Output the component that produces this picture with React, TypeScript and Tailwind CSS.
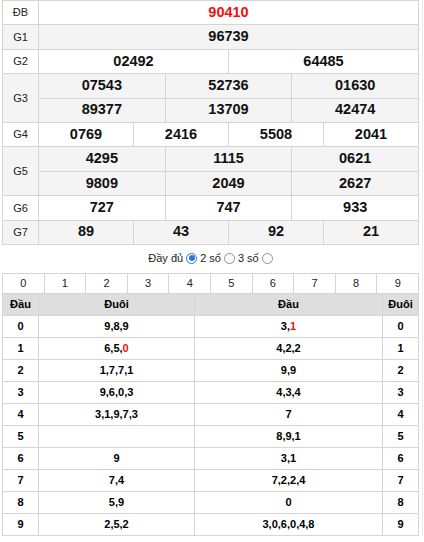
import React from "react";

const line = "border-[#d5d5d5]";

type Prize = { label: string; bg: string; span: string; nums: string[]; red?: boolean; double?: boolean };

const prizes: Prize[] = [
  { label: "ĐB", bg: "bg-white", span: "col-span-12", nums: ["90410"], red: true },
  { label: "G1", bg: "bg-[#f4f4f4]", span: "col-span-12", nums: ["96739"] },
  { label: "G2", bg: "bg-white", span: "col-span-6", nums: ["02492", "64485"] },
  { label: "G3", bg: "bg-[#f4f4f4]", span: "col-span-4", nums: ["07543", "52736", "01630", "89377", "13709", "42474"], double: true },
  { label: "G4", bg: "bg-white", span: "col-span-3", nums: ["0769", "2416", "5508", "2041"] },
  { label: "G5", bg: "bg-[#f4f4f4]", span: "col-span-4", nums: ["4295", "1115", "0621", "9809", "2049", "2627"], double: true },
  { label: "G6", bg: "bg-white", span: "col-span-4", nums: ["727", "747", "933"] },
  { label: "G7", bg: "bg-[#f4f4f4]", span: "col-span-3", nums: ["89", "43", "92", "21"] },
];

// [head, duoi list, dau list]; a "*" marks the red digit
const loto: [string, string, string][] = [
  ["0", "9,8,9", "3,*1"],
  ["1", "6,5,*0", "4,2,2"],
  ["2", "1,7,7,1", "9,9"],
  ["3", "9,6,0,3", "4,3,4"],
  ["4", "3,1,9,7,3", "7"],
  ["5", "", "8,9,1"],
  ["6", "9", "3,1"],
  ["7", "7,4", "7,2,2,4"],
  ["8", "5,9", "0"],
  ["9", "2,5,2", "3,0,6,0,4,8"],
];

function Digits({ text }: { text: string }) {
  const i = text.indexOf("*");
  if (i < 0) return <>{text}</>;
  return (
    <>
      {text.slice(0, i)}
      <span className="text-[#ee1111]">{text.slice(i + 1)}</span>
    </>
  );
}

function Radio({ on }: { on?: boolean }) {
  return (
    <span
      className={`inline-flex h-[11px] w-[11px] items-center justify-center rounded-full border ${
        on ? "border-[#2a78d6]" : "border-[#8f8f8f]"
      } bg-white`}
    >
      {on && <span className="h-[6px] w-[6px] rounded-full bg-[#2a78d6]" />}
    </span>
  );
}

export default function App() {
  return (
    <div className="h-[542px] w-[424px] bg-white font-['Liberation_Sans',Arial,sans-serif] text-black">
      <div className="w-[423px] border-r border-[#ededed] pl-[2px] pr-[3px]">
        {/* result table */}
        <div className={`grid grid-cols-[36px_repeat(12,1fr)] auto-rows-[24.4px] border-l border-t ${line}`}>
          {prizes.map((p) => (
            <React.Fragment key={p.label}>
              <div
                className={`${p.double ? "row-span-2" : ""} ${p.bg} flex items-center justify-center border-b border-r ${line} text-[11px] text-[#222]`}
              >
                {p.label}
              </div>
              {p.nums.map((n, i) => (
                <div
                  key={p.label + i}
                  className={`${p.span} ${p.bg} flex items-center justify-center border-b border-r ${line} text-[14.5px] font-bold ${
                    p.red ? "text-[#ee1111]" : "text-[#111]"
                  }`}
                >
                  {n}
                </div>
              ))}
            </React.Fragment>
          ))}
        </div>

        {/* display options */}
        <div className="flex h-[26px] items-center justify-center gap-[3px] pt-[1px] text-[11px] text-[#222]">
          <span>Đầy đủ</span>
          <Radio on />
          <span>2 số</span>
          <Radio />
          <span>3 số</span>
          <Radio />
        </div>

        {/* digit strip */}
        <div className={`mt-[2px] grid grid-cols-10 border-l border-t ${line}`}>
          {Array.from({ length: 10 }, (_, i) => (
            <div key={i} className={`flex h-[20px] items-center justify-center border-b border-r ${line} text-[11px] text-[#222]`}>
              {i}
            </div>
          ))}
        </div>

        {/* loto table */}
        <div className={`grid grid-cols-[36px_156px_188px_1fr] border-l ${line} text-[11px] font-bold`}>
          <div className={`flex h-[22px] items-center justify-center border-b border-r bg-[#dedede] ${line}`}>Đầu</div>
          <div className={`flex h-[22px] items-center justify-center border-b border-r bg-[#dedede] ${line}`}>Đuôi</div>
          <div className={`flex h-[22px] items-center justify-center border-b border-r bg-[#dedede] ${line}`}>Đầu</div>
          <div className={`flex h-[22px] items-center justify-center border-b border-r bg-[#dedede] ${line}`}>Đuôi</div>
          {loto.map(([h, duoi, dau]) => (
            <React.Fragment key={h}>
              <div className={`flex h-[22px] items-center justify-center border-b border-r ${line}`}>{h}</div>
              <div className={`flex h-[22px] items-center justify-center border-b border-r ${line}`}>
                <Digits text={duoi} />
              </div>
              <div className={`flex h-[22px] items-center justify-center border-b border-r ${line}`}>
                <Digits text={dau} />
              </div>
              <div className={`flex h-[22px] items-center justify-center border-b border-r ${line}`}>{h}</div>
            </React.Fragment>
          ))}
        </div>
      </div>
    </div>
  );
}
